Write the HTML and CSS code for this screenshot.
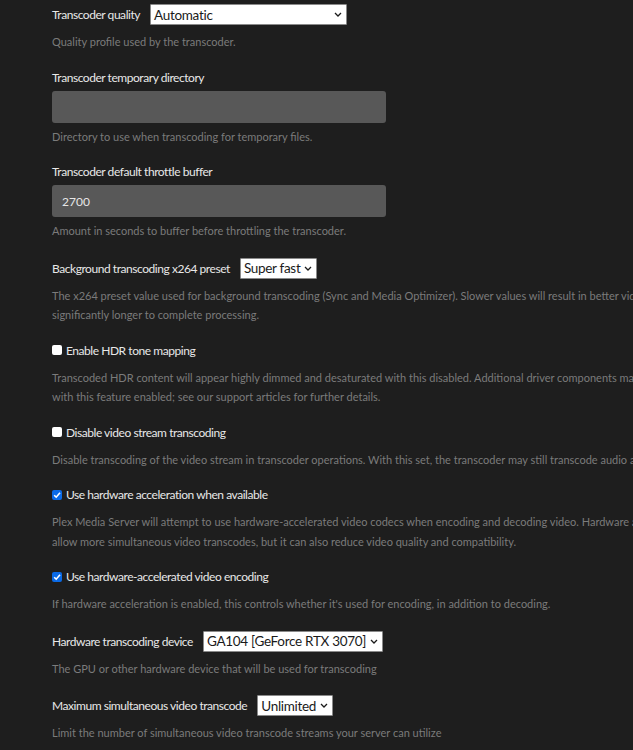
FILE: index.html
```html
<!DOCTYPE html>
<html lang="en">
<head>
<meta charset="utf-8">
<title>Transcoder settings</title>
<link rel="stylesheet" href="styles.css">
</head>
<body>
<main class="settings">

  <section class="setting">
    <div class="row row-select">
      <span class="label">Transcoder quality</span>
      <div class="select select-wide"><span>Automatic</span><svg class="chev" viewBox="0 0 8 5"><path d="M1 1l3 3 3-3"/></svg></div>
    </div>
    <p class="desc">Quality profile used by the transcoder.</p>
  </section>

  <section class="setting">
    <div class="row"><span class="label">Transcoder temporary directory</span></div>
    <div class="field"></div>
    <p class="desc">Directory to use when transcoding for temporary files.</p>
  </section>

  <section class="setting">
    <div class="row"><span class="label">Transcoder default throttle buffer</span></div>
    <div class="field">2700</div>
    <p class="desc">Amount in seconds to buffer before throttling the transcoder.</p>
  </section>

  <section class="setting">
    <div class="row row-select">
      <span class="label">Background transcoding x264 preset</span>
      <div class="select"><span>Super fast</span><svg class="chev" viewBox="0 0 8 5"><path d="M1 1l3 3 3-3"/></svg></div>
    </div>
    <p class="desc">The x264 preset value used for background transcoding (Sync and Media Optimizer). Slower values will result in better video quality and smaller file sizes, but will take<br>significantly longer to complete processing.</p>
  </section>

  <section class="setting">
    <div class="row">
      <span class="check"></span>
      <span class="label">Enable HDR tone mapping</span>
    </div>
    <p class="desc">Transcoded HDR content will appear highly dimmed and desaturated with this disabled. Additional driver components may be required for hardware transcoding<br>with this feature enabled; see our support articles for further details.</p>
  </section>

  <section class="setting">
    <div class="row">
      <span class="check"></span>
      <span class="label">Disable video stream transcoding</span>
    </div>
    <p class="desc">Disable transcoding of the video stream in transcoder operations. With this set, the transcoder may still transcode audio and subtitles.</p>
  </section>

  <section class="setting">
    <div class="row">
      <span class="check checked"><svg viewBox="0 0 10 10"><path d="M2.2 5.2l2 2 3.8-4.4"/></svg></span>
      <span class="label">Use hardware acceleration when available</span>
    </div>
    <p class="desc">Plex Media Server will attempt to use hardware-accelerated video codecs when encoding and decoding video. Hardware acceleration can make transcoding faster and<br>allow more simultaneous video transcodes, but it can also reduce video quality and compatibility.</p>
  </section>

  <section class="setting">
    <div class="row">
      <span class="check checked"><svg viewBox="0 0 10 10"><path d="M2.2 5.2l2 2 3.8-4.4"/></svg></span>
      <span class="label">Use hardware-accelerated video encoding</span>
    </div>
    <p class="desc">If hardware acceleration is enabled, this controls whether it's used for encoding, in addition to decoding.</p>
  </section>

  <section class="setting">
    <div class="row row-select">
      <span class="label">Hardware transcoding device</span>
      <div class="select"><span>GA104 [GeForce RTX 3070]</span><svg class="chev" viewBox="0 0 8 5"><path d="M1 1l3 3 3-3"/></svg></div>
    </div>
    <p class="desc">The GPU or other hardware device that will be used for transcoding</p>
  </section>

  <section class="setting">
    <div class="row row-select">
      <span class="label">Maximum simultaneous video transcode</span>
      <div class="select"><span>Unlimited</span><svg class="chev" viewBox="0 0 8 5"><path d="M1 1l3 3 3-3"/></svg></div>
    </div>
    <p class="desc">Limit the number of simultaneous video transcode streams your server can utilize</p>
  </section>

</main>
</body>
</html>
```

FILE: styles.css
```css
html, body {
  margin: 0;
  padding: 0;
  background: #1e1e1e;
  overflow: hidden;
}

body {
  font-family: Lato, "Open Sans", sans-serif;
  color: #e6e6e6;
}

.settings {
  width: 1000px;
  padding: 2px 0 0 52px;
}

.setting {
  margin: 0 0 15px;
}

.row {
  display: flex;
  align-items: center;
  height: 21px;
}

.row-select {
  height: 25px;
}

.label {
  font-size: 12px;
  letter-spacing: -0.45px;
  color: #e8e8e8;
  white-space: nowrap;
}

.row .select {
  margin-left: 10px;
}

.select {
  display: inline-flex;
  align-items: center;
  height: 21px;
  box-sizing: border-box;
  padding: 0 4px 0 3px;
  background: #ffffff;
  border: 1px solid #8a8a8a;
  border-radius: 1px;
  color: #1a1a1a;
  font-size: 13.5px;
  letter-spacing: -0.3px;
  white-space: nowrap;
}

.select-wide {
  width: 197px;
  justify-content: space-between;
}

.chev {
  width: 8px;
  height: 5px;
  margin-left: 4px;
  fill: none;
  stroke: #1a1a1a;
  stroke-width: 1.3;
}

.field {
  width: 334px;
  height: 32px;
  box-sizing: border-box;
  margin-top: 3px;
  padding-left: 10px;
  display: flex;
  align-items: center;
  background: #585858;
  border-radius: 3px;
  font-size: 12px;
  color: #e6e6e6;
}

.desc {
  margin: 7px 0 0;
  font-size: 11px;
  line-height: 19.5px;
  letter-spacing: 0;
  color: #7b7b7b;
  white-space: nowrap;
}

.row-select + .desc {
  margin-top: 5px;
}

.field + .desc {
  margin-top: 4px;
}

.check {
  width: 10px;
  height: 10px;
  box-sizing: border-box;
  margin-right: 4px;
  background: #ffffff;
  border-radius: 2px;
  display: flex;
}

.check.checked {
  background: #0a6ae6;
}

.check svg {
  width: 10px;
  height: 10px;
  fill: none;
  stroke: #ffffff;
  stroke-width: 1.6;
}
```
